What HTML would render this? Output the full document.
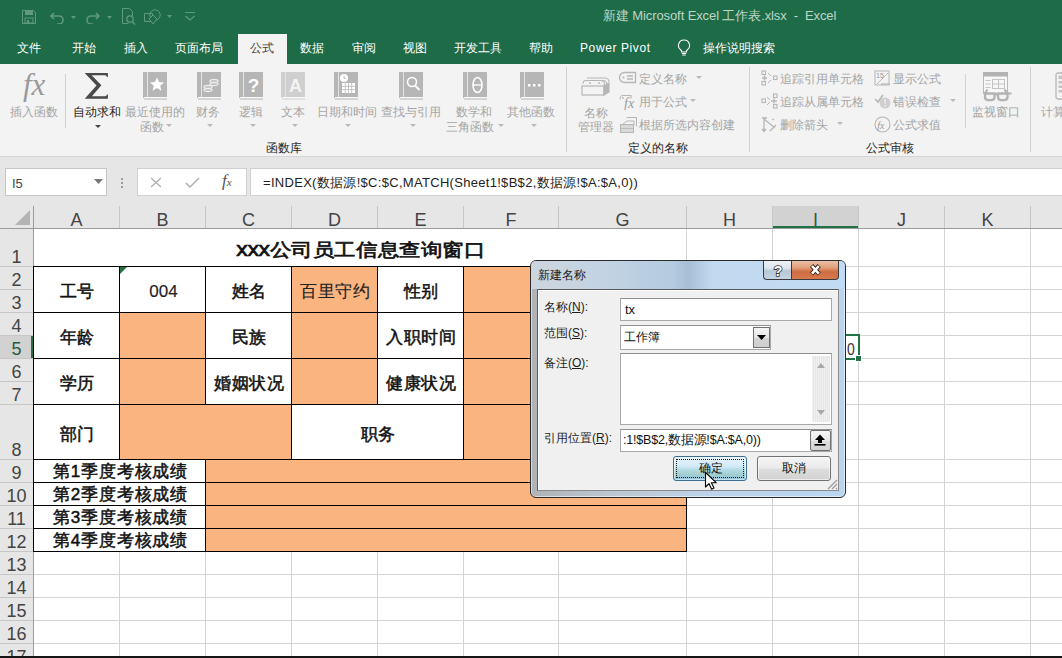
<!DOCTYPE html><html><head><meta charset="utf-8"><style>
*{box-sizing:border-box}
html,body{margin:0;padding:0;width:1062px;height:658px;overflow:hidden;background:#fff;font-family:"Liberation Sans",sans-serif}
.ab{position:absolute}
.t{position:absolute;white-space:nowrap;line-height:1}
</style></head><body>
<div class="ab" style="left:0px;top:0px;width:1062px;height:64px;background:#1e6b48"></div>
<div class="t" style="left:603px;top:9px;font-size:13px;color:#bdd7c7;letter-spacing:-0.1px;">新建 Microsoft Excel 工作表.xlsx&nbsp; -&nbsp; Excel</div>
<svg class="ab" style="left:22px;top:10px;" width="14" height="14" viewBox="0 0 14 14"><path d="M0.5 0.5h11l2 2v11h-13z" fill="none" stroke="#5f9a7a"/><rect x="3" y="1" width="8" height="4" fill="#5f9a7a"/><rect x="3" y="8" width="8" height="5" fill="none" stroke="#5f9a7a"/><rect x="5" y="10" width="2" height="3" fill="#5f9a7a"/></svg>
<svg class="ab" style="left:50px;top:11px;" width="28" height="13" viewBox="0 0 28 13"><path d="M4 2 L1 5 L4 8 M1.5 5 H9 a4 4 0 0 1 0 8 H7" fill="none" stroke="#5f9a7a" stroke-width="1.6"/><path d="M21 5h5l-2.5 3z" fill="#5f9a7a"/></svg>
<svg class="ab" style="left:86px;top:11px;" width="28" height="13" viewBox="0 0 28 13"><path d="M10 2 L13 5 L10 8 M12.5 5 H5 a4 4 0 0 0 0 8 H7" fill="none" stroke="#5f9a7a" stroke-width="1.6"/><path d="M21 5h5l-2.5 3z" fill="#5f9a7a"/></svg>
<svg class="ab" style="left:122px;top:8px;" width="14" height="17" viewBox="0 0 14 17"><path d="M0.5 0.5h7l3 3v5 M0.5 0.5v15h6" fill="none" stroke="#5f9a7a"/><circle cx="8" cy="11" r="3.2" fill="none" stroke="#5f9a7a" stroke-width="1.3"/><path d="M10 13.5l3 3" stroke="#5f9a7a" stroke-width="1.5"/></svg>
<svg class="ab" style="left:144px;top:9px;" width="30" height="16" viewBox="0 0 30 16"><path d="M0.5 4.5h8v8h-8z" fill="none" stroke="#5f9a7a"/><circle cx="11" cy="6" r="5.2" fill="none" stroke="#5f9a7a"/><path d="M5 10l4-4 4 4-4 5z" fill="#1e6b48" stroke="#5f9a7a"/><path d="M23 6h5l-2.5 3z" fill="#5f9a7a"/></svg>
<svg class="ab" style="left:184px;top:12px;" width="12" height="9" viewBox="0 0 12 9"><path d="M1 0.5h10" stroke="#5f9a7a"/><path d="M1.5 4l4.5 4 4.5-4" fill="none" stroke="#5f9a7a" stroke-width="1.3"/></svg>
<div class="ab" style="left:238px;top:34px;width:49px;height:30px;background:#f3f3f3"></div>
<div class="t" style="left:17px;top:42px;font-size:12px;color:#fff;">文件</div>
<div class="t" style="left:72px;top:42px;font-size:12px;color:#fff;">开始</div>
<div class="t" style="left:124px;top:42px;font-size:12px;color:#fff;">插入</div>
<div class="t" style="left:175px;top:42px;font-size:12px;color:#fff;">页面布局</div>
<div class="t" style="left:250px;top:42px;font-size:12px;color:#444;">公式</div>
<div class="t" style="left:300px;top:42px;font-size:12px;color:#fff;">数据</div>
<div class="t" style="left:352px;top:42px;font-size:12px;color:#fff;">审阅</div>
<div class="t" style="left:403px;top:42px;font-size:12px;color:#fff;">视图</div>
<div class="t" style="left:454px;top:42px;font-size:12px;color:#fff;">开发工具</div>
<div class="t" style="left:529px;top:42px;font-size:12px;color:#fff;">帮助</div>
<div class="t" style="left:580px;top:42px;font-size:12px;color:#fff;letter-spacing:0.6px;">Power Pivot</div>
<div class="t" style="left:703px;top:42px;font-size:12px;color:#fff;">操作说明搜索</div>
<svg class="ab" style="left:677px;top:39px;" width="14" height="17" viewBox="0 0 14 17"><path d="M7 1a5.5 5.5 0 0 0-3.2 10c.7.6.9 1.2.9 2h4.6c0-.8.2-1.4.9-2A5.5 5.5 0 0 0 7 1z" fill="none" stroke="#fff" stroke-width="1.1"/><path d="M4.8 14.5h4.4M5.3 16h3.4" stroke="#fff" stroke-width="1"/></svg>
<div class="ab" style="left:0px;top:64px;width:1062px;height:93px;background:#f3f3f3;border-bottom:1px solid #d5d5d5"></div>
<div class="ab" style="left:65px;top:74px;width:1px;height:54px;background:#d1d1d1"></div>
<div class="ab" style="left:566px;top:67px;width:1px;height:85px;background:#d1d1d1"></div>
<div class="ab" style="left:749px;top:67px;width:1px;height:85px;background:#d1d1d1"></div>
<div class="ab" style="left:965px;top:74px;width:1px;height:54px;background:#d1d1d1"></div>
<div class="ab" style="left:1030px;top:67px;width:1px;height:85px;background:#d1d1d1"></div>
<div class="t" style="left:23px;top:69px;font-size:31px;color:#9a9a9a;font-family:Liberation Serif,serif;"><i>fx</i></div>
<div class="t" style="left:10px;top:106px;font-size:12px;color:#a5a5a5;">插入函数</div>
<svg class="ab" style="left:84px;top:72px;" width="25" height="28" viewBox="0 0 25 28"><path d="M0.7 0.9H23.9V5H23Q22.5 3.2 21 3.2H7.6L17.4 13.3L7.9 24.2H21Q22.5 24.2 23 22.4H23.9V26.7H0.7L12.5 13.5Z" fill="#4a4a4a"/></svg>
<div class="t" style="left:73px;top:106px;font-size:12px;color:#262626;">自动求和</div>
<svg class="ab" style="left:95px;top:125px;" width="6" height="4" viewBox="0 0 6 4"><path d="M0 0h6l-3 3z" fill="#444"/></svg>
<svg class="ab" style="left:143px;top:72px;" width="25" height="28" viewBox="0 0 25 28"><rect x="0" y="0" width="24" height="26" fill="#b6b6b6"/><rect x="4" y="0" width="1" height="25" fill="#e3e3e3"/><rect x="1" y="25" width="23" height="1.2" fill="#fafafa"/><rect x="1" y="26.5" width="23" height="1" fill="#b6b6b6"/><path d="M14 5.5l2 4.6 5 .4-3.8 3.3 1.2 4.9L14 16.1l-4.4 2.6 1.2-4.9L7 10.5l5-.4z" fill="#fff"/></svg>
<svg class="ab" style="left:197px;top:72px;" width="25" height="28" viewBox="0 0 25 28"><rect x="0" y="0" width="24" height="26" fill="#b6b6b6"/><rect x="4" y="0" width="1" height="25" fill="#e3e3e3"/><rect x="1" y="25" width="23" height="1.2" fill="#fafafa"/><rect x="1" y="26.5" width="23" height="1" fill="#b6b6b6"/><g fill="none" stroke="#ececec" stroke-width="1.3"><ellipse cx="17" cy="9" rx="4" ry="1.5"/><ellipse cx="17" cy="12" rx="4" ry="1.5"/><ellipse cx="11" cy="15" rx="4" ry="1.5"/><ellipse cx="11" cy="18" rx="4" ry="1.5"/></g></svg>
<svg class="ab" style="left:239px;top:72px;" width="25" height="28" viewBox="0 0 25 28"><rect x="0" y="0" width="24" height="26" fill="#b6b6b6"/><rect x="4" y="0" width="1" height="25" fill="#e3e3e3"/><rect x="1" y="25" width="23" height="1.2" fill="#fafafa"/><rect x="1" y="26.5" width="23" height="1" fill="#b6b6b6"/><text x="14.5" y="20" font-size="19" font-weight="bold" text-anchor="middle" fill="#fff" font-family="Liberation Sans">?</text></svg>
<svg class="ab" style="left:281px;top:72px;" width="25" height="28" viewBox="0 0 25 28"><rect x="0" y="0" width="24" height="26" fill="#cfcfcf"/><rect x="4" y="0" width="1" height="25" fill="#e3e3e3"/><rect x="1" y="25" width="23" height="1.2" fill="#fafafa"/><rect x="1" y="26.5" width="23" height="1" fill="#cfcfcf"/><text x="14.5" y="20" font-size="18" font-weight="bold" text-anchor="middle" fill="#f3f3f3" font-family="Liberation Sans">A</text></svg>
<svg class="ab" style="left:334px;top:72px;" width="25" height="28" viewBox="0 0 25 28"><rect x="0" y="0" width="24" height="26" fill="#b6b6b6"/><rect x="4" y="0" width="1" height="25" fill="#e3e3e3"/><rect x="1" y="25" width="23" height="1.2" fill="#fafafa"/><rect x="1" y="26.5" width="23" height="1" fill="#b6b6b6"/><circle cx="10" cy="6" r="4" fill="#fff"/><path d="M10 3.5v2.8h2" stroke="#b6b6b6" stroke-width="0.9" fill="none"/><g fill="#fff"><rect x="8" y="11" width="13" height="10"/></g><g stroke="#b6b6b6" stroke-width="0.8"><path d="M8 14.3h13M8 17.6h13M11.3 11v10M14.5 11v10M17.7 11v10"/></g></svg>
<svg class="ab" style="left:399px;top:72px;" width="25" height="28" viewBox="0 0 25 28"><rect x="0" y="0" width="24" height="26" fill="#b6b6b6"/><rect x="4" y="0" width="1" height="25" fill="#e3e3e3"/><rect x="1" y="25" width="23" height="1.2" fill="#fafafa"/><rect x="1" y="26.5" width="23" height="1" fill="#b6b6b6"/><circle cx="13" cy="10" r="4.5" fill="none" stroke="#fff" stroke-width="1.6"/><path d="M16 13.5l4.5 4.5" stroke="#fff" stroke-width="2"/></svg>
<svg class="ab" style="left:463px;top:72px;" width="25" height="28" viewBox="0 0 25 28"><rect x="0" y="0" width="24" height="26" fill="#b6b6b6"/><rect x="4" y="0" width="1" height="25" fill="#e3e3e3"/><rect x="1" y="25" width="23" height="1.2" fill="#fafafa"/><rect x="1" y="26.5" width="23" height="1" fill="#b6b6b6"/><ellipse cx="14.5" cy="13" rx="4.5" ry="7.5" fill="none" stroke="#fff" stroke-width="1.6"/><path d="M10 13h9" stroke="#fff" stroke-width="1.4"/></svg>
<svg class="ab" style="left:520px;top:72px;" width="25" height="28" viewBox="0 0 25 28"><rect x="0" y="0" width="24" height="26" fill="#b6b6b6"/><rect x="4" y="0" width="1" height="25" fill="#e3e3e3"/><rect x="1" y="25" width="23" height="1.2" fill="#fafafa"/><rect x="1" y="26.5" width="23" height="1" fill="#b6b6b6"/><g fill="#fff"><rect x="8" y="12" width="2.5" height="2.5"/><rect x="13" y="12" width="2.5" height="2.5"/><rect x="18" y="12" width="2.5" height="2.5"/></g></svg>
<div class="t" style="left:125px;top:106px;font-size:12px;color:#a5a5a5;">最近使用的</div>
<div class="t" style="left:140px;top:121px;font-size:12px;color:#a5a5a5;">函数</div>
<svg class="ab" style="left:166px;top:124px;" width="6" height="4" viewBox="0 0 6 4"><path d="M0 0h6l-3 3z" fill="#b9b9b9"/></svg>
<div class="t" style="left:196px;top:106px;font-size:12px;color:#a5a5a5;">财务</div>
<svg class="ab" style="left:207px;top:124px;" width="6" height="4" viewBox="0 0 6 4"><path d="M0 0h6l-3 3z" fill="#b9b9b9"/></svg>
<div class="t" style="left:239px;top:106px;font-size:12px;color:#a5a5a5;">逻辑</div>
<svg class="ab" style="left:250px;top:124px;" width="6" height="4" viewBox="0 0 6 4"><path d="M0 0h6l-3 3z" fill="#b9b9b9"/></svg>
<div class="t" style="left:281px;top:106px;font-size:12px;color:#a5a5a5;">文本</div>
<svg class="ab" style="left:292px;top:124px;" width="6" height="4" viewBox="0 0 6 4"><path d="M0 0h6l-3 3z" fill="#b9b9b9"/></svg>
<div class="t" style="left:317px;top:106px;font-size:12px;color:#a5a5a5;">日期和时间</div>
<svg class="ab" style="left:345px;top:124px;" width="6" height="4" viewBox="0 0 6 4"><path d="M0 0h6l-3 3z" fill="#b9b9b9"/></svg>
<div class="t" style="left:381px;top:106px;font-size:12px;color:#a5a5a5;">查找与引用</div>
<svg class="ab" style="left:410px;top:124px;" width="6" height="4" viewBox="0 0 6 4"><path d="M0 0h6l-3 3z" fill="#b9b9b9"/></svg>
<div class="t" style="left:456px;top:106px;font-size:12px;color:#a5a5a5;">数学和</div>
<div class="t" style="left:446px;top:121px;font-size:12px;color:#a5a5a5;">三角函数</div>
<svg class="ab" style="left:498px;top:124px;" width="6" height="4" viewBox="0 0 6 4"><path d="M0 0h6l-3 3z" fill="#b9b9b9"/></svg>
<div class="t" style="left:507px;top:106px;font-size:12px;color:#a5a5a5;">其他函数</div>
<svg class="ab" style="left:531px;top:124px;" width="6" height="4" viewBox="0 0 6 4"><path d="M0 0h6l-3 3z" fill="#b9b9b9"/></svg>
<div class="t" style="left:266px;top:142px;font-size:12px;color:#262626;">函数库</div>
<svg class="ab" style="left:581px;top:74px;" width="30" height="24" viewBox="0 0 30 24"><g fill="none" stroke="#b6b6b6" stroke-width="1.2"><path d="M6 4h18a4 4 0 0 1 4 4"/><path d="M4 6.5h18a4 4 0 0 1 4 4"/><path d="M2 9.5c0-2 1.5-3 3-3h15c2 0 3.5 1.5 3.5 3.5v2"/><rect x="1" y="12" width="22" height="9"/><path d="M23 12l5-3v9l-5 3z" fill="#b6b6b6"/></g><circle cx="9" cy="9" r="0.9" fill="#b6b6b6"/><circle cx="18" cy="9" r="0.9" fill="#b6b6b6"/></svg>
<div class="t" style="left:584px;top:107px;font-size:12px;color:#a5a5a5;">名称</div>
<div class="t" style="left:578px;top:121px;font-size:12px;color:#a5a5a5;">管理器</div>
<svg class="ab" style="left:619px;top:71px;" width="18" height="14" viewBox="0 0 18 14"><path d="M5.5 1.5h11v10h-11a5 5 0 0 1 0-10z" fill="none" stroke="#b6b6b6" stroke-width="1.3"/><circle cx="4.5" cy="6.5" r="1" fill="#b6b6b6"/><path d="M8 5h6M8 8h6" stroke="#b6b6b6" stroke-width="1.3"/></svg>
<svg class="ab" style="left:619px;top:93px;" width="18" height="17" viewBox="0 0 18 17"><path d="M1 6.5c0-2 1-4 3-4h8v3" fill="none" stroke="#b6b6b6" stroke-width="1.1"/><circle cx="4" cy="5" r="0.9" fill="#b6b6b6"/><text x="5" y="15" font-size="14" font-style="italic" fill="#9a9a9a" font-family="Liberation Serif">fx</text></svg>
<svg class="ab" style="left:619px;top:116px;" width="18" height="17" viewBox="0 0 18 17"><path d="M7.5 1.5h10v9" fill="none" stroke="#b6b6b6" stroke-width="1.1"/><path d="M4 8l4-3h7v4" fill="none" stroke="#b6b6b6" stroke-width="1"/><rect x="1.5" y="8.5" width="13" height="8" fill="#d9d9d9" stroke="#b6b6b6"/><path d="M1.5 12.5h13" stroke="#b6b6b6" stroke-width="0.8"/></svg>
<div class="t" style="left:639px;top:73px;font-size:12px;color:#a5a5a5;">定义名称</div>
<svg class="ab" style="left:696px;top:76px;" width="6" height="4" viewBox="0 0 6 4"><path d="M0 0h6l-3 3z" fill="#b9b9b9"/></svg>
<div class="t" style="left:639px;top:96px;font-size:12px;color:#a5a5a5;">用于公式</div>
<svg class="ab" style="left:690px;top:99px;" width="6" height="4" viewBox="0 0 6 4"><path d="M0 0h6l-3 3z" fill="#b9b9b9"/></svg>
<div class="t" style="left:639px;top:119px;font-size:12px;color:#a5a5a5;">根据所选内容创建</div>
<div class="t" style="left:628px;top:142px;font-size:12px;color:#262626;">定义的名称</div>
<svg class="ab" style="left:761px;top:70px;" width="17" height="17" viewBox="0 0 17 17"><g fill="none" stroke="#b6b6b6" stroke-width="1.1"><rect x="1" y="1" width="3.5" height="3.5"/><rect x="1" y="11.5" width="3.5" height="3.5"/><rect x="12.5" y="6" width="3.5" height="3.5"/></g><path d="M1 8h5M3.5 5.5v5" stroke="#b6b6b6" stroke-width="1.4"/><path d="M7 3l3 3M7 13l3-3" stroke="#b6b6b6" stroke-width="1"/></svg>
<svg class="ab" style="left:761px;top:93px;" width="17" height="17" viewBox="0 0 17 17"><g fill="none" stroke="#b6b6b6" stroke-width="1.1"><rect x="1" y="6" width="3.5" height="3.5"/><rect x="12.5" y="1" width="3.5" height="3.5"/><rect x="12.5" y="11.5" width="3.5" height="3.5"/></g><path d="M10 8h6M13 5.5v5" stroke="#b6b6b6" stroke-width="1.4"/><path d="M6 4l3 3M6 12l3-3" stroke="#b6b6b6" stroke-width="1"/></svg>
<svg class="ab" style="left:761px;top:116px;" width="17" height="17" viewBox="0 0 17 17"><path d="M3 1v14M1 13l2 2.5 2-2.5M1 2h5M3 3l11 9M9 15l6-6M13 3l-2 1" fill="none" stroke="#b6b6b6" stroke-width="1.3"/></svg>
<div class="t" style="left:780px;top:73px;font-size:12px;color:#a5a5a5;">追踪引用单元格</div>
<div class="t" style="left:780px;top:96px;font-size:12px;color:#a5a5a5;">追踪从属单元格</div>
<div class="t" style="left:780px;top:119px;font-size:12px;color:#a5a5a5;">删除箭头</div>
<svg class="ab" style="left:837px;top:122px;" width="6" height="4" viewBox="0 0 6 4"><path d="M0 0h6l-3 3z" fill="#b9b9b9"/></svg>
<svg class="ab" style="left:874px;top:70px;" width="17" height="17" viewBox="0 0 17 17"><rect x="1" y="1" width="14" height="14" fill="none" stroke="#b6b6b6"/><text x="2" y="8" font-size="7" fill="#999" font-family="Liberation Sans">15</text><path d="M3 14l11-11" stroke="#b6b6b6"/><path d="M7 14h9" stroke="#b6b6b6" stroke-width="1.2"/></svg>
<svg class="ab" style="left:874px;top:93px;" width="17" height="17" viewBox="0 0 17 17"><path d="M1 6l3 3 5-7" fill="none" stroke="#b6b6b6" stroke-width="1.6"/><circle cx="11" cy="10" r="5.5" fill="#cfcfcf"/><path d="M11 6.5v4M11 12v1.5" stroke="#f3f3f3" stroke-width="1.4"/></svg>
<svg class="ab" style="left:874px;top:116px;" width="17" height="17" viewBox="0 0 17 17"><circle cx="8.5" cy="8.5" r="7.5" fill="none" stroke="#b6b6b6" stroke-width="1.1"/><text x="3.3" y="12.5" font-size="10" font-style="italic" fill="#999" font-family="Liberation Serif">fx</text></svg>
<div class="t" style="left:893px;top:73px;font-size:12px;color:#a5a5a5;">显示公式</div>
<div class="t" style="left:893px;top:96px;font-size:12px;color:#a5a5a5;">错误检查</div>
<svg class="ab" style="left:950px;top:99px;" width="6" height="4" viewBox="0 0 6 4"><path d="M0 0h6l-3 3z" fill="#b9b9b9"/></svg>
<div class="t" style="left:893px;top:119px;font-size:12px;color:#a5a5a5;">公式求值</div>
<div class="t" style="left:866px;top:142px;font-size:12px;color:#262626;">公式审核</div>
<svg class="ab" style="left:982px;top:71px;" width="32" height="31" viewBox="0 0 32 31"><rect x="1.5" y="1.5" width="24" height="21" fill="#f7f7f7" stroke="#b8b8b8"/><rect x="1" y="1" width="25" height="4.5" fill="#b3b3b3"/><g stroke="#c4c4c4" stroke-width="1" fill="none"><path d="M3.5 9.5h5M3.5 13h5M3.5 16.5h5"/><rect x="10.5" y="8.5" width="12" height="9"/><path d="M16.5 8.5v9M10.5 13h12"/></g><g fill="#f3f3f3" stroke="#b3b3b3" stroke-width="2.3"><path d="M3 22.5h9.5v3.5c0 2-1.5 3.2-3.5 3.2H6.5c-2 0-3.5-1.2-3.5-3.2z"/><path d="M16 22.5h9.5v3.5c0 2-1.5 3.2-3.5 3.2h-2.5c-2 0-3.5-1.2-3.5-3.2z"/></g><path d="M12.5 23.5h3.5M3 22.5l2.5-4M25.5 22.5l-3-4M25.5 22.5h4" stroke="#b3b3b3" stroke-width="2.2" fill="none"/></svg>
<div class="t" style="left:972px;top:106px;font-size:12px;color:#a5a5a5;">监视窗口</div>
<svg class="ab" style="left:1055px;top:72px;" width="20" height="28" viewBox="0 0 20 28"><rect x="1" y="1" width="18" height="26" rx="2" fill="none" stroke="#b6b6b6" stroke-width="1.3"/><g fill="#c3c3c3"><rect x="3.5" y="3.5" width="13" height="3.5"/><rect x="3.5" y="9" width="13" height="2.5"/><rect x="3.5" y="13.5" width="13" height="2.5"/><rect x="3.5" y="18" width="13" height="2.5"/></g></svg>
<div class="t" style="left:1041px;top:106px;font-size:12px;color:#a5a5a5;">计算选项</div>
<div class="ab" style="left:0px;top:157px;width:1062px;height:72px;background:#e6e6e6"></div>
<div class="ab" style="left:5px;top:168px;width:102px;height:28px;background:#fff;border:1px solid #c6c6c6"></div>
<div class="t" style="left:12px;top:177px;font-size:13px;color:#444;">I5</div>
<svg class="ab" style="left:94px;top:179px;" width="9" height="5" viewBox="0 0 9 5"><path d="M0 0h9l-4.5 5z" fill="#777"/></svg>
<div class="ab" style="left:121px;top:178px;width:2px;height:2px;background:#9a9a9a"></div>
<div class="ab" style="left:121px;top:182px;width:2px;height:2px;background:#9a9a9a"></div>
<div class="ab" style="left:121px;top:186px;width:2px;height:2px;background:#9a9a9a"></div>
<div class="ab" style="left:137px;top:168px;width:110px;height:28px;background:#fff;border:1px solid #d0d0d0"></div>
<svg class="ab" style="left:150px;top:177px;" width="12" height="11" viewBox="0 0 12 11"><path d="M1 1l10 9M11 1l-10 9" stroke="#b0b0b0" stroke-width="1.3"/></svg>
<svg class="ab" style="left:185px;top:177px;" width="15" height="11" viewBox="0 0 15 11"><path d="M1 6l4 4 9-9" fill="none" stroke="#b0b0b0" stroke-width="1.5"/></svg>
<div class="t" style="left:222px;top:172px;font-size:17px;color:#555;font-family:Liberation Serif,serif;"><i>f<span style="font-size:11px">x</span></i></div>
<div class="ab" style="left:250px;top:168px;width:820px;height:28px;background:#fff;border:1px solid #d0d0d0"></div>
<div class="t" style="left:263px;top:176px;font-size:13px;color:#222;letter-spacing:0.3px;">=INDEX(数据源!$C:$C,MATCH(Sheet1!$B$2,数据源!$A:$A,0))</div>
<div class="ab" style="left:34px;top:229px;width:1028px;height:427px;background:#fff"></div>
<div class="ab" style="left:0px;top:229px;width:33px;height:427px;background:#e6e6e6"></div>
<div class="ab" style="left:773px;top:206px;width:85px;height:22px;background:#d2d2d2"></div>
<div class="ab" style="left:773px;top:226px;width:85px;height:2px;background:#217346"></div>
<div class="ab" style="left:0px;top:336px;width:33px;height:22px;background:#d2d2d2"></div>
<div class="ab" style="left:31px;top:336px;width:2px;height:22px;background:#217346"></div>
<div class="ab" style="left:119px;top:229px;width:1px;height:427px;background:#d4d4d4"></div>
<div class="ab" style="left:119px;top:206px;width:1px;height:22px;background:#c6c6c6"></div>
<div class="ab" style="left:205px;top:229px;width:1px;height:427px;background:#d4d4d4"></div>
<div class="ab" style="left:205px;top:206px;width:1px;height:22px;background:#c6c6c6"></div>
<div class="ab" style="left:291px;top:229px;width:1px;height:427px;background:#d4d4d4"></div>
<div class="ab" style="left:291px;top:206px;width:1px;height:22px;background:#c6c6c6"></div>
<div class="ab" style="left:377px;top:229px;width:1px;height:427px;background:#d4d4d4"></div>
<div class="ab" style="left:377px;top:206px;width:1px;height:22px;background:#c6c6c6"></div>
<div class="ab" style="left:463px;top:229px;width:1px;height:427px;background:#d4d4d4"></div>
<div class="ab" style="left:463px;top:206px;width:1px;height:22px;background:#c6c6c6"></div>
<div class="ab" style="left:558px;top:229px;width:1px;height:427px;background:#d4d4d4"></div>
<div class="ab" style="left:558px;top:206px;width:1px;height:22px;background:#c6c6c6"></div>
<div class="ab" style="left:686px;top:229px;width:1px;height:427px;background:#d4d4d4"></div>
<div class="ab" style="left:686px;top:206px;width:1px;height:22px;background:#c6c6c6"></div>
<div class="ab" style="left:772px;top:229px;width:1px;height:427px;background:#d4d4d4"></div>
<div class="ab" style="left:772px;top:206px;width:1px;height:22px;background:#c6c6c6"></div>
<div class="ab" style="left:858px;top:229px;width:1px;height:427px;background:#d4d4d4"></div>
<div class="ab" style="left:858px;top:206px;width:1px;height:22px;background:#c6c6c6"></div>
<div class="ab" style="left:944px;top:229px;width:1px;height:427px;background:#d4d4d4"></div>
<div class="ab" style="left:944px;top:206px;width:1px;height:22px;background:#c6c6c6"></div>
<div class="ab" style="left:1030px;top:229px;width:1px;height:427px;background:#d4d4d4"></div>
<div class="ab" style="left:1030px;top:206px;width:1px;height:22px;background:#c6c6c6"></div>
<div class="ab" style="left:34px;top:266px;width:1028px;height:1px;background:#d4d4d4"></div>
<div class="ab" style="left:0px;top:266px;width:33px;height:1px;background:#c6c6c6"></div>
<div class="ab" style="left:34px;top:289px;width:1028px;height:1px;background:#d4d4d4"></div>
<div class="ab" style="left:0px;top:289px;width:33px;height:1px;background:#c6c6c6"></div>
<div class="ab" style="left:34px;top:312px;width:1028px;height:1px;background:#d4d4d4"></div>
<div class="ab" style="left:0px;top:312px;width:33px;height:1px;background:#c6c6c6"></div>
<div class="ab" style="left:34px;top:335px;width:1028px;height:1px;background:#d4d4d4"></div>
<div class="ab" style="left:0px;top:335px;width:33px;height:1px;background:#c6c6c6"></div>
<div class="ab" style="left:34px;top:358px;width:1028px;height:1px;background:#d4d4d4"></div>
<div class="ab" style="left:0px;top:358px;width:33px;height:1px;background:#c6c6c6"></div>
<div class="ab" style="left:34px;top:381px;width:1028px;height:1px;background:#d4d4d4"></div>
<div class="ab" style="left:0px;top:381px;width:33px;height:1px;background:#c6c6c6"></div>
<div class="ab" style="left:34px;top:404px;width:1028px;height:1px;background:#d4d4d4"></div>
<div class="ab" style="left:0px;top:404px;width:33px;height:1px;background:#c6c6c6"></div>
<div class="ab" style="left:34px;top:459px;width:1028px;height:1px;background:#d4d4d4"></div>
<div class="ab" style="left:0px;top:459px;width:33px;height:1px;background:#c6c6c6"></div>
<div class="ab" style="left:34px;top:482px;width:1028px;height:1px;background:#d4d4d4"></div>
<div class="ab" style="left:0px;top:482px;width:33px;height:1px;background:#c6c6c6"></div>
<div class="ab" style="left:34px;top:505px;width:1028px;height:1px;background:#d4d4d4"></div>
<div class="ab" style="left:0px;top:505px;width:33px;height:1px;background:#c6c6c6"></div>
<div class="ab" style="left:34px;top:528px;width:1028px;height:1px;background:#d4d4d4"></div>
<div class="ab" style="left:0px;top:528px;width:33px;height:1px;background:#c6c6c6"></div>
<div class="ab" style="left:34px;top:551px;width:1028px;height:1px;background:#d4d4d4"></div>
<div class="ab" style="left:0px;top:551px;width:33px;height:1px;background:#c6c6c6"></div>
<div class="ab" style="left:34px;top:574px;width:1028px;height:1px;background:#d4d4d4"></div>
<div class="ab" style="left:0px;top:574px;width:33px;height:1px;background:#c6c6c6"></div>
<div class="ab" style="left:34px;top:597px;width:1028px;height:1px;background:#d4d4d4"></div>
<div class="ab" style="left:0px;top:597px;width:33px;height:1px;background:#c6c6c6"></div>
<div class="ab" style="left:34px;top:620px;width:1028px;height:1px;background:#d4d4d4"></div>
<div class="ab" style="left:0px;top:620px;width:33px;height:1px;background:#c6c6c6"></div>
<div class="ab" style="left:34px;top:643px;width:1028px;height:1px;background:#d4d4d4"></div>
<div class="ab" style="left:0px;top:643px;width:33px;height:1px;background:#c6c6c6"></div>
<div class="ab" style="left:34px;top:229px;width:652px;height:37px;background:#fff"></div>
<div class="ab" style="left:33px;top:206px;width:1px;height:450px;background:#9b9b9b"></div>
<div class="ab" style="left:0px;top:228px;width:1062px;height:1px;background:#9b9b9b"></div>
<svg class="ab" style="left:15px;top:210px;" width="16" height="16" viewBox="0 0 16 16"><path d="M15 0v15H0z" fill="#b4b4b4"/></svg>
<div class="t" style="left:34px;top:211px;width:85px;text-align:center;font-size:18px;color:#444">A</div>
<div class="t" style="left:120px;top:211px;width:85px;text-align:center;font-size:18px;color:#444">B</div>
<div class="t" style="left:206px;top:211px;width:85px;text-align:center;font-size:18px;color:#444">C</div>
<div class="t" style="left:292px;top:211px;width:85px;text-align:center;font-size:18px;color:#444">D</div>
<div class="t" style="left:378px;top:211px;width:85px;text-align:center;font-size:18px;color:#444">E</div>
<div class="t" style="left:464px;top:211px;width:94px;text-align:center;font-size:18px;color:#444">F</div>
<div class="t" style="left:559px;top:211px;width:127px;text-align:center;font-size:18px;color:#444">G</div>
<div class="t" style="left:687px;top:211px;width:85px;text-align:center;font-size:18px;color:#444">H</div>
<div class="t" style="left:773px;top:211px;width:85px;text-align:center;font-size:18px;color:#2c5a42">I</div>
<div class="t" style="left:859px;top:211px;width:85px;text-align:center;font-size:18px;color:#444">J</div>
<div class="t" style="left:945px;top:211px;width:85px;text-align:center;font-size:18px;color:#444">K</div>
<div class="t" style="left:0;top:248px;width:33px;text-align:center;font-size:18px;color:#444">1</div>
<div class="t" style="left:0;top:271px;width:33px;text-align:center;font-size:18px;color:#444">2</div>
<div class="t" style="left:0;top:294px;width:33px;text-align:center;font-size:18px;color:#444">3</div>
<div class="t" style="left:0;top:317px;width:33px;text-align:center;font-size:18px;color:#444">4</div>
<div class="t" style="left:0;top:340px;width:33px;text-align:center;font-size:18px;color:#2c5a42">5</div>
<div class="t" style="left:0;top:363px;width:33px;text-align:center;font-size:18px;color:#444">6</div>
<div class="t" style="left:0;top:386px;width:33px;text-align:center;font-size:18px;color:#444">7</div>
<div class="t" style="left:0;top:441px;width:33px;text-align:center;font-size:18px;color:#444">8</div>
<div class="t" style="left:0;top:464px;width:33px;text-align:center;font-size:18px;color:#444">9</div>
<div class="t" style="left:0;top:487px;width:33px;text-align:center;font-size:18px;color:#444">10</div>
<div class="t" style="left:0;top:510px;width:33px;text-align:center;font-size:18px;color:#444">11</div>
<div class="t" style="left:0;top:533px;width:33px;text-align:center;font-size:18px;color:#444">12</div>
<div class="t" style="left:0;top:556px;width:33px;text-align:center;font-size:18px;color:#444">13</div>
<div class="t" style="left:0;top:579px;width:33px;text-align:center;font-size:18px;color:#444">14</div>
<div class="t" style="left:0;top:602px;width:33px;text-align:center;font-size:18px;color:#444">15</div>
<div class="t" style="left:0;top:625px;width:33px;text-align:center;font-size:18px;color:#444">16</div>
<div class="t" style="left:0;top:648px;width:33px;text-align:center;font-size:18px;color:#444">17</div>
<div class="ab" style="left:0px;top:656px;width:1062px;height:2px;background:#151515"></div>
<div class="t" style="left:35px;top:238px;width:652px;text-align:center;font-size:21px;letter-spacing:0.6px;-webkit-text-stroke:0.8px #111;color:#111;transform:scaleY(0.84);transform-origin:50% 50%"><span style="letter-spacing:-0.4px;font-size:23px">xxx</span>公司员工信息查询窗口</div>
<div class="ab" style="left:33px;top:266px;width:87px;height:47px;background:#fff;border:1px solid #000"></div>
<div class="t" style="left:34px;top:283px;width:87px;text-align:center;font-size:17px;letter-spacing:0.8px;color:#111;-webkit-text-stroke:0.5px #111;">工号</div>
<div class="ab" style="left:119px;top:266px;width:87px;height:47px;background:#fff;border:1px solid #000"></div>
<div class="t" style="left:120px;top:283px;width:87px;text-align:center;font-size:17px;letter-spacing:0px;color:#222;-webkit-text-stroke:0.15px #222;">004</div>
<div class="ab" style="left:205px;top:266px;width:87px;height:47px;background:#fff;border:1px solid #000"></div>
<div class="t" style="left:206px;top:283px;width:87px;text-align:center;font-size:17px;letter-spacing:0.8px;color:#111;-webkit-text-stroke:0.5px #111;">姓名</div>
<div class="ab" style="left:291px;top:266px;width:87px;height:47px;background:#fab480;border:1px solid #000"></div>
<div class="t" style="left:292px;top:283px;width:87px;text-align:center;font-size:17px;letter-spacing:0.8px;color:#222;-webkit-text-stroke:0.15px #222;">百里守约</div>
<div class="ab" style="left:377px;top:266px;width:87px;height:47px;background:#fff;border:1px solid #000"></div>
<div class="t" style="left:378px;top:283px;width:87px;text-align:center;font-size:17px;letter-spacing:0.8px;color:#111;-webkit-text-stroke:0.5px #111;">性别</div>
<div class="ab" style="left:463px;top:266px;width:224px;height:47px;background:#fab480;border:1px solid #000"></div>
<div class="ab" style="left:33px;top:312px;width:87px;height:47px;background:#fff;border:1px solid #000"></div>
<div class="t" style="left:34px;top:329px;width:87px;text-align:center;font-size:17px;letter-spacing:0.8px;color:#111;-webkit-text-stroke:0.5px #111;">年龄</div>
<div class="ab" style="left:119px;top:312px;width:87px;height:47px;background:#fab480;border:1px solid #000"></div>
<div class="ab" style="left:205px;top:312px;width:87px;height:47px;background:#fff;border:1px solid #000"></div>
<div class="t" style="left:206px;top:329px;width:87px;text-align:center;font-size:17px;letter-spacing:0.8px;color:#111;-webkit-text-stroke:0.5px #111;">民族</div>
<div class="ab" style="left:291px;top:312px;width:87px;height:47px;background:#fab480;border:1px solid #000"></div>
<div class="ab" style="left:377px;top:312px;width:87px;height:47px;background:#fff;border:1px solid #000"></div>
<div class="t" style="left:378px;top:329px;width:87px;text-align:center;font-size:17px;letter-spacing:0.8px;color:#111;-webkit-text-stroke:0.5px #111;">入职时间</div>
<div class="ab" style="left:463px;top:312px;width:224px;height:47px;background:#fab480;border:1px solid #000"></div>
<div class="ab" style="left:33px;top:358px;width:87px;height:47px;background:#fff;border:1px solid #000"></div>
<div class="t" style="left:34px;top:375px;width:87px;text-align:center;font-size:17px;letter-spacing:0.8px;color:#111;-webkit-text-stroke:0.5px #111;">学历</div>
<div class="ab" style="left:119px;top:358px;width:87px;height:47px;background:#fab480;border:1px solid #000"></div>
<div class="ab" style="left:205px;top:358px;width:87px;height:47px;background:#fff;border:1px solid #000"></div>
<div class="t" style="left:206px;top:375px;width:87px;text-align:center;font-size:17px;letter-spacing:0.8px;color:#111;-webkit-text-stroke:0.5px #111;">婚姻状况</div>
<div class="ab" style="left:291px;top:358px;width:87px;height:47px;background:#fab480;border:1px solid #000"></div>
<div class="ab" style="left:377px;top:358px;width:87px;height:47px;background:#fff;border:1px solid #000"></div>
<div class="t" style="left:378px;top:375px;width:87px;text-align:center;font-size:17px;letter-spacing:0.8px;color:#111;-webkit-text-stroke:0.5px #111;">健康状况</div>
<div class="ab" style="left:463px;top:358px;width:224px;height:47px;background:#fab480;border:1px solid #000"></div>
<div class="ab" style="left:33px;top:404px;width:87px;height:56px;background:#fff;border:1px solid #000"></div>
<div class="t" style="left:34px;top:426px;width:87px;text-align:center;font-size:17px;letter-spacing:0.8px;color:#111;-webkit-text-stroke:0.5px #111;">部门</div>
<div class="ab" style="left:119px;top:404px;width:173px;height:56px;background:#fab480;border:1px solid #000"></div>
<div class="ab" style="left:291px;top:404px;width:173px;height:56px;background:#fff;border:1px solid #000"></div>
<div class="t" style="left:292px;top:426px;width:173px;text-align:center;font-size:17px;letter-spacing:0.8px;color:#111;-webkit-text-stroke:0.5px #111;">职务</div>
<div class="ab" style="left:463px;top:404px;width:224px;height:56px;background:#fab480;border:1px solid #000"></div>
<div class="ab" style="left:33px;top:459px;width:173px;height:24px;background:#fff;border:1px solid #000"></div>
<div class="t" style="left:34px;top:463px;width:173px;text-align:center;font-size:17px;letter-spacing:0.8px;color:#111;-webkit-text-stroke:0.5px #111;">第1季度考核成绩</div>
<div class="ab" style="left:205px;top:459px;width:482px;height:24px;background:#fab480;border:1px solid #000"></div>
<div class="ab" style="left:33px;top:482px;width:173px;height:24px;background:#fff;border:1px solid #000"></div>
<div class="t" style="left:34px;top:486px;width:173px;text-align:center;font-size:17px;letter-spacing:0.8px;color:#111;-webkit-text-stroke:0.5px #111;">第2季度考核成绩</div>
<div class="ab" style="left:205px;top:482px;width:482px;height:24px;background:#fab480;border:1px solid #000"></div>
<div class="ab" style="left:33px;top:505px;width:173px;height:24px;background:#fff;border:1px solid #000"></div>
<div class="t" style="left:34px;top:509px;width:173px;text-align:center;font-size:17px;letter-spacing:0.8px;color:#111;-webkit-text-stroke:0.5px #111;">第3季度考核成绩</div>
<div class="ab" style="left:205px;top:505px;width:482px;height:24px;background:#fab480;border:1px solid #000"></div>
<div class="ab" style="left:33px;top:528px;width:173px;height:24px;background:#fff;border:1px solid #000"></div>
<div class="t" style="left:34px;top:532px;width:173px;text-align:center;font-size:17px;letter-spacing:0.8px;color:#111;-webkit-text-stroke:0.5px #111;">第4季度考核成绩</div>
<div class="ab" style="left:205px;top:528px;width:482px;height:24px;background:#fab480;border:1px solid #000"></div>
<svg class="ab" style="left:120px;top:267px;" width="7" height="7" viewBox="0 0 7 7"><path d="M0 0h7L0 7z" fill="#217346"/></svg>
<div class="ab" style="left:771px;top:334px;width:89px;height:26px;border:2px solid #217346"></div>
<div class="ab" style="left:856px;top:356px;width:5px;height:5px;background:#217346;outline:1px solid #fff"></div>
<div class="t" style="left:847px;top:341px;font-size:17px;color:#333;transform:scaleX(0.82);transform-origin:left;">0</div>
<div class="ab" style="left:530px;top:260px;width:316px;height:238px;border:1px solid #2b2b2b;border-radius:6px;box-shadow:inset 0 0 0 1px rgba(255,255,255,0.55);background:linear-gradient(90deg,#b0b3b6 0%,#bcc6d0 25%,#bcd3ea 55%,#b9d6f1 100%)"></div>
<div class="ab" style="left:531px;top:261px;width:314px;height:28px;border-radius:5px 5px 0 0;background:linear-gradient(90deg,#cdd6de 0%,#c3d3e3 22%,#b5cbe0 45%,#a7bfd6 50%,#c2daf0 58%,#c0dbf3 100%)"></div>
<div class="t" style="left:538px;top:269px;font-size:12px;color:#1a1a1a;">新建名称</div>
<div class="ab" style="left:763px;top:261px;width:29px;height:19px;border:1px solid #3a3a3a;border-top:none;border-right:none;border-radius:0 0 0 4px;background:linear-gradient(180deg,#eef2f6 0%,#dde4ec 40%,#b7c7d6 55%,#c5d5e2 100%)"></div>
<svg class="ab" style="left:770px;top:262px;" width="16" height="16" viewBox="0 0 16 16"><text x="8" y="13.5" font-size="14" font-weight="bold" text-anchor="middle" fill="#fff" stroke="#2b3848" stroke-width="1.6" paint-order="stroke" font-family="Liberation Sans">?</text></svg>
<div class="ab" style="left:791px;top:261px;width:48px;height:19px;border:1px solid #3a3a3a;border-top:none;border-radius:0 0 4px 0;background:linear-gradient(180deg,#e9c0a6 0%,#e2a27f 35%,#cf6c41 60%,#d67a4d 100%)"></div>
<svg class="ab" style="left:808px;top:263px;" width="15" height="14" viewBox="0 0 15 14"><path d="M3.6 2.6l7.6 8.4M11.2 2.6l-7.6 8.4" stroke="#3d2618" stroke-width="4.4"/><path d="M4 3l6.8 7.6M10.8 3l-6.8 7.6" stroke="#fff" stroke-width="2.6"/></svg>
<div class="ab" style="left:537px;top:289px;width:302px;height:202px;background:#f0f0f0;border:1px solid #5a5a5a;border-right-color:#8a8a8a;border-bottom-color:#8a8a8a;box-shadow:inset 1px 1px 0 #fcfcfc"></div>
<div class="t" style="left:544px;top:301px;font-size:12px;color:#1e1e1e">名称(<span style="text-decoration:underline;text-underline-offset:1px">N</span>):</div>
<div class="t" style="left:544px;top:327px;font-size:12px;color:#1e1e1e">范围(<span style="text-decoration:underline;text-underline-offset:1px">S</span>):</div>
<div class="t" style="left:544px;top:357px;font-size:12px;color:#1e1e1e">备注(<span style="text-decoration:underline;text-underline-offset:1px">O</span>):</div>
<div class="t" style="left:544px;top:432px;font-size:12px;color:#1e1e1e">引用位置(<span style="text-decoration:underline;text-underline-offset:1px">R</span>):</div>
<div class="ab" style="left:620px;top:298px;width:212px;height:23px;background:#fff;border:1px solid #a9a9a9;border-top-color:#8f8f8f"></div>
<div class="t" style="left:625px;top:303px;font-size:13px;color:#111;">tx</div>
<div class="ab" style="left:620px;top:325px;width:151px;height:25px;background:#fff;border:1px solid #a9a9a9;border-top-color:#8f8f8f"></div>
<div class="t" style="left:624px;top:331px;font-size:12px;color:#111;">工作簿</div>
<div class="ab" style="left:753px;top:327px;width:17px;height:21px;border:1px solid #707070;background:linear-gradient(180deg,#f4f4f4 0%,#e6e6e6 50%,#d4d4d4 51%,#cfcfcf 100%)"></div>
<svg class="ab" style="left:757px;top:335px;" width="9" height="5" viewBox="0 0 9 5"><path d="M0 0h9l-4.5 5z" fill="#000"/></svg>
<div class="ab" style="left:620px;top:353px;width:212px;height:72px;background:#fff;border:1px solid #a9a9a9;border-top-color:#8f8f8f"></div>
<div class="ab" style="left:812px;top:356px;width:18px;height:66px;background:repeating-linear-gradient(90deg,#f0f0f0 0 1px,#e6e6e6 1px 2px)"></div>
<svg class="ab" style="left:817px;top:363px;" width="8" height="5" viewBox="0 0 8 5"><path d="M0 5h8L4 0z" fill="#a8a8a8"/></svg>
<svg class="ab" style="left:817px;top:410px;" width="8" height="5" viewBox="0 0 8 5"><path d="M0 0h8L4 5z" fill="#a8a8a8"/></svg>
<div class="ab" style="left:620px;top:429px;width:212px;height:23px;background:#fff;border:1px solid #a9a9a9;border-top-color:#8f8f8f"></div>
<div class="t" style="left:623px;top:434px;font-size:12.5px;color:#111;letter-spacing:-0.2px;">:1!$B$2,数据源!$A:$A,0))</div>
<div class="ab" style="left:810px;top:430px;width:21px;height:21px;border:1px solid #707070;border-radius:2px;background:linear-gradient(180deg,#f6f6f6 0%,#e9e9e9 50%,#dcdcdc 51%,#d3d3d3 100%)"></div>
<svg class="ab" style="left:814px;top:434px;" width="12" height="12" viewBox="0 0 12 12"><path d="M6 0.5L1 6h3v3h4V6h3z" fill="#000"/><rect x="0.5" y="10" width="11" height="1.6" fill="#000"/></svg>
<div class="ab" style="left:673px;top:456px;width:74px;height:25px;border:1px solid #3c6f94;border-radius:3px;background:linear-gradient(180deg,#e8f4fb 0%,#d2eaf8 40%,#b4dbe6 55%,#a2cfcf 75%,#8cc2df 100%);box-shadow:inset 0 0 0 1px rgba(255,255,255,0.5)"></div>
<div class="ab" style="left:676px;top:459px;width:68px;height:19px;border:1px dotted #1a1a1a"></div>
<div class="t" style="left:699px;top:462px;font-size:12px;color:#111;">确定</div>
<div class="ab" style="left:757px;top:456px;width:74px;height:25px;border:1px solid #707070;border-radius:3px;background:linear-gradient(180deg,#f4f4f4 0%,#ebebeb 48%,#dddddd 52%,#d2d2d2 100%);box-shadow:inset 0 0 0 1px rgba(255,255,255,0.6)"></div>
<div class="t" style="left:782px;top:462px;font-size:12px;color:#111;">取消</div>
<svg class="ab" style="left:826px;top:478px;" width="12" height="12" viewBox="0 0 12 12"><path d="M11 2L2 11M11 6L6 11M11 10l-1 1" stroke="#9a9a9a" stroke-width="1.3"/></svg>
<svg class="ab" style="left:704px;top:471px;" width="14" height="20" viewBox="0 0 14 20"><path d="M1.5 1.5v14.5l3.5-3.4 2.6 5.6 2.4-1.1-2.6-5.4h4.8z" fill="#fff" stroke="#000" stroke-width="1.1" stroke-linejoin="round"/></svg>
</body></html>
